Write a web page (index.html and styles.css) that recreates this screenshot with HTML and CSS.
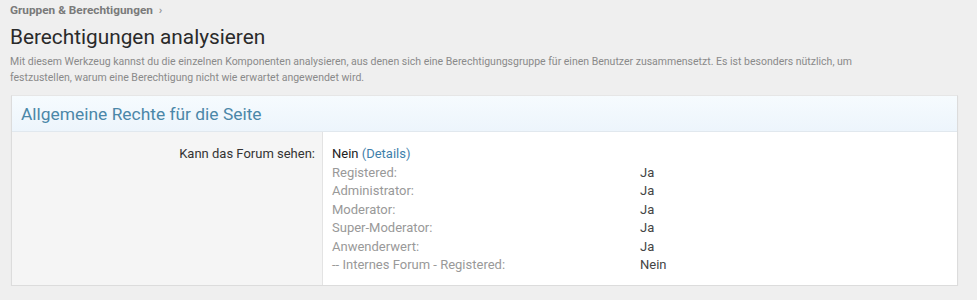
FILE: index.html
```html
<!DOCTYPE html>
<html lang="de">
    <head>
        <meta charset="utf-8">
        <title>Berechtigungen analysieren</title>
        <link rel="stylesheet" href="styles.css">
    </head>
    <body>
<div class="crumbs"><a href="#">Gruppen &amp; Berechtigungen</a> <span class="sep">&rsaquo;</span></div>
<h1>Berechtigungen analysieren</h1>
<p class="explain">Mit diesem Werkzeug kannst du die einzelnen Komponenten analysieren, aus denen sich eine Berechtigungsgruppe für einen Benutzer zusammensetzt. Es ist besonders nützlich, um festzustellen, warum eine Berechtigung nicht wie erwartet angewendet wird.</p>
<div class="block">
    <h2 class="block-head">Allgemeine Rechte für die Seite</h2>
    <dl class="pair">
        <dt>Kann das Forum sehen:</dt>
        <dd>
            <div class="result">Nein <a href="#">(Details)</a></div>
            <ul class="details">
                <li><span>Registered:</span><span class="val">Ja</span></li>
                <li><span>Administrator:</span><span class="val">Ja</span></li>
                <li><span>Moderator:</span><span class="val">Ja</span></li>
                <li><span>Super-Moderator:</span><span class="val">Ja</span></li>
                <li><span>Anwenderwert:</span><span class="val">Ja</span></li>
                <li><span>-- Internes Forum - Registered:</span><span class="val">Nein</span></li>
            </ul>
        </dd>
    </dl>
</div>
    </body>
</html>
```

FILE: styles.css
```css
body {
    margin: 0;
    padding: 0 19px 0 10px;
    background: #efefef;
    font-family: Roboto, sans-serif;
    color: #222;
}
.crumbs {
    padding-top: 2px;
    height: 16px;
    font-size: 11.8px;
    line-height: 16px;
    font-weight: bold;
}
.crumbs a {
    color: #7a7a7a;
    text-decoration: none;
}
.crumbs .sep {
    color: #999;
    margin-left: 3px;
}
h1 {
    margin: 6px 0 0 0;
    font-size: 20.8px;
    font-weight: normal;
    line-height: 26px;
    color: #2a2a2a;
}
.explain {
    max-width: 850px;
    margin: 4px 0 0 0;
    font-size: 10.5px;
    line-height: 15.5px;
    color: #8a8a8a;
}
.block {
    margin: 10px 0 0 1px;
    border: 1px solid #dcdcdc;
    border-top-color: #e6e6e6;
    background: #fff;
    box-shadow: 0 1px 1px rgba(0,0,0,0.06);
}
.block-head {
    margin: 0;
    padding: 0 9px;
    height: 35px;
    line-height: 37px;
    font-size: 17.4px;
    font-weight: normal;
    color: #4b87a8;
    background: linear-gradient(to bottom, #f6fbfe, #edf5fc);
    border-bottom: 1px solid #e1e8ee;
}
.pair {
    display: flex;
    margin: 0;
    font-size: 13px;
}
.pair dt {
    box-sizing: border-box;
    width: 311px;
    padding: 14px 7px 0 0;
    text-align: right;
    background: #f5f5f5;
    border-right: 1px solid #e3e3e3;
    color: #333;
}
.pair dd {
    flex: 1;
    margin: 0;
    padding: 13px 8px 10px 9px;
    line-height: 18.5px;
}
.result a {
    color: #3f7fab;
    text-decoration: none;
}
.details {
    margin: 0;
    padding: 0;
    list-style: none;
    color: #999;
}
.details li {
    display: grid;
    grid-template-columns: 308px auto;
}
.details .val {
    color: #444;
}
```
